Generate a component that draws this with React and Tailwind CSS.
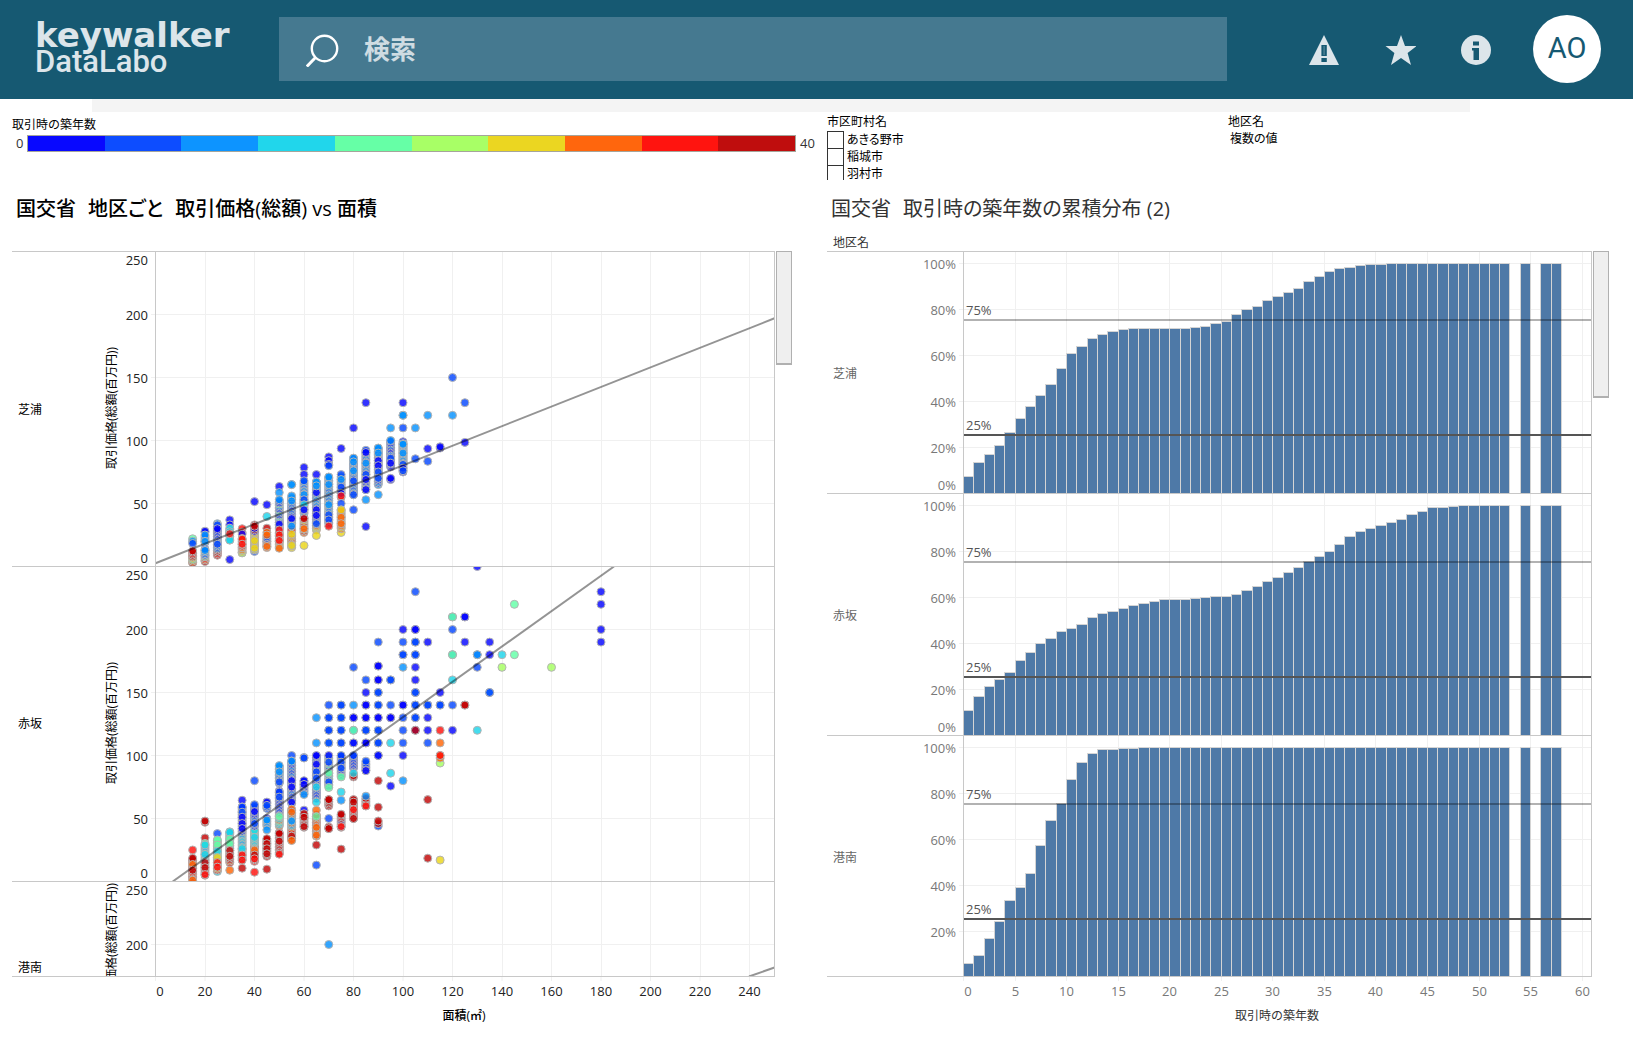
import React from "react";

const SANS = "font-['Open_Sans','Noto_Sans_CJK_JP',sans-serif]";

const PALETTE = ["#0000ff", "#0044ff", "#0090ff", "#18d3ea", "#5fffa5", "#a3ff5c", "#ead414", "#ff6200", "#ff0c08", "#c00000"];
const LEGEND = ["#0808ff", "#0d4dff", "#0d94ff", "#21d6eb", "#66ffa6", "#a8ff66", "#ebd621", "#ff660d", "#ff140f", "#bf0d0d"];

/*
 * Scatter marks, one string per floor-area column.
 * "v:c" is one mark (price v, colour index c); "a-b:cc" is a stack from a to b
 * that cycles through the given colour indexes. Later marks lie on top.
 */
const SHIBAURA = {
  15: "3:6 3-9:9746 9-12:98 22:4 20:2 18.3:1 12.4:9",
  20: "4.5:7 4-9:9784 9-14:212 27:0 28:0 19-26:12 20:2 12.7:2",
  25: "9-13:989 13:9 14-24:2121 34:2 27-33:1 24-29:01 30:0 17.7:1",
  30: "37:0 33:0 28-31:3 24-28:3 21:3 21:3 26:8 5.5:0",
  35: "10.8:6 11-15:567 30:8 27:8 25.7:0 15-23:78 21.7:8 17.7:8",
  40: "51.5:0 12-16:16 16-28:676 28-31:09 33:9 32:9 20.5:6 14.5:6",
  45: "49:0 39.7:3 15-20:77 20-24:171 30.4:9 27:7 25:7 16:7",
  50: "63.5:0 58.7:2 15-20:676 20-28:78 30-35:0 35-52:4012 53:2 33.6:0 29:8 25:8 20.6:8 14.5:7",
  55: "65:2 65:2 15-20:6 20-30:678 34-55:0212 56:2 52:2 38:0 32:2 25.6:6 16.7:6",
  60: "78.6:0 73:0 27-40:796 42-52:03 50-68:212 68:1 57:2 53:1 49:3 45:0 38:9 30:7 16.7:6",
  65: "73:0 29-36:756 36-50:01 49-68:2122 67:2 58.7:0 64:2 45:0 40.5:0 34:1 24.6:6",
  70: "87:0 84:0 81:0 80:1 34-44:101 44-54:3421 54-72:212 71:2 65:2 49:2 41:1 37:1 32:8",
  75: "93.7:0 27:6 30-45:767 55:8 58-72:012 73:1 69:2 63:1 58:0 56:8 50:1 45:6 39:7 34:7",
  80: "110:0 57-86:1212 86:2 83:2 76:2 68:1 57:1 45:1",
  85: "130:0 61-93:2012 90.5:0 82:2 73:1 69:0 61:0 53:2 31.7:0",
  90: "65-94:2120 94:2 90:2 84:0 80:0 75:1 70:1 57:2",
  95: "110:2 79-100:0012 100:2 86:1 82:0 69:0 70:0",
  100: "130:0 120:2 120:2 110:1 75-100:0102 82-98:22 97:2 90:2 81:1 78:0 76:1",
  105: "110:2 85.5:1",
  110: "120:2 93.5:0 83.5:1",
  115: "94:0 95:0",
  120: "150:1 120:2",
  125: "130:1 98.5:0",
};

const AKASAKA = {
  15: "1:7 3-12:99878 25:8 13-18:98 18.5:9 13.5:7 9:9 1:7",
  20: "47:9 48:9 34.6:9 5-17:989 17-31:3234 29:3 21.5:3 15:9 11:9 5.5:8",
  25: "38:1 8-18:38677 18-33:4345 33:4 29:4 24:3 19:6 15:8 11.4:8",
  30: "9:7 15-25:979 25-40:3433 39:3 33.6:4 30:4 24.6:9 20:9",
  35: "64.5:0 17-26:98 26-40:3323 40-60:0120 59:1 55:1 51:0 46:0 42:0 26:3 21:8 17:8 10.6:9",
  40: "80:1 16-30:899 30-42:4333 44-60:0121 61:1 55.5:0 46:1 35:3 25:7 21:9 18:8 7.4:8",
  45: "62:0 63:0 58-61:1 50:0 44-49:22 41:2 20-34:99 34:9 30:9 26:9 22:9 9.8:9",
  50: "78-92:122 92:2 87:2 79:1 22-40:989 44-54:7334 55-72:0101 71:1 67:1 51.6:4 38:9 32:9 21.7:8",
  55: "100:1 62-96:1201 95.5:2 80:0 75:0 63:0 33-42:789 43-58:732 55:7 48:2 36:9 32.5:7",
  60: "98.4:1 98:1 70-80:001 80:0 77:0 69:2 56.6:0 43-54:9989 51:9 43.6:9",
  65: "130:2 110:2 66-100:0111 100:0 93:0 87:1 82:1 75:3 63:3 36-54:7987 56.6:7 51.6:4 43:7 36.8:7 29:9 13:1",
  70: "140:1 130:1 130:1 120:1 120:1 110:2 110:1 76-100:0143 100:0 94.7:1 86:4 79:1 74.6:4 60-65:9 65:9 50:1 42-44:9 42:9",
  75: "140:1 140:1 130:1 130:1 120:1 120:1 110:1 110:1 84-100:101 100:1 94.7:1 90:1 83:4 71:3 64.5:2 43-53:9098 53.4:9 43.6:8 25.7:9",
  80: "170:1 140:2 130:0 130:0 120:2 120:4 110:1 110:0 90-100:01 100:1 83:9 84:9 86:3 50-65:9898 65:9 63:9 57:8 50:9",
  85: "160:1 150:0 140:0 140:0 130:0 130:0 120:1 120:1 110:0 110:0 88-95:01 95.5:1 88:0 60-67:89 67.7:2 60:8",
  90: "190:1 171:0 171:0 160:0 160:0 150:1 150:1 140:1 140:1 130:0 130:0 120:1 120:1 110:1 110:1 100:1 100:0 80:9 59:9 44:1 46:9 48:9",
  95: "160:1 160:1 140:1 130:0 130:0 110:3 86:3 75.7:0",
  100: "200:0 190:1 180:1 180:1 170:2 140:0 140:0 130:1 120:1 110:1 100:0 80:2",
  105: "230:1 200:0 200:0 190:1 190:1 180:1 180:1 170:0 160:0 150:1 150:1 140:1 140:1 130:1 130:1 120:0 120:9",
  110: "190:0 140:1 140:1 130:0 120:0 110:1 65:9 18.5:9",
  115: "150:0 140:1 140:1 120:8 110:7 94:5 98:7 100:7 100:8 17:6",
  120: "210:2 210:4 200:1 180:2 180:4 160:3 140:1 120:0",
  125: "210:0 210:0 190:0 140:9 140:9",
  130: "250:0 180:1 180:2 170:1 120:3",
  135: "190:0 180:0 150:2 150:1",
  140: "180:3 170:5",
  145: "220:4 180:4",
  160: "170:5",
  180: "230:0 220:0 200:0 190:0",
};

const KONAN = { 70: "200:2" };

function expand(columns) {
  const marks = [];
  for (const area of Object.keys(columns)) {
    for (const part of columns[area].split(" ")) {
      const [range, colours] = part.split(":");
      const [from, to] = range.split("-").map(Number);
      if (to === undefined) {
        marks.push([Number(area), from, Number(colours)]);
      } else {
        let i = 0;
        for (let v = from; v <= to; v += 1.2) {
          marks.push([Number(area), v, Number(colours[i % colours.length])]);
          i += 1;
        }
      }
    }
  }
  return marks;
}

const SCATTER_ROWS = [
  { name: "芝浦", top: 251.5, base: 566.5, nameY: 414, titleY: 408, marks: expand(SHIBAURA), line: [155.5, 563.3, 774.5, 318.3], ticks: [250, 200, 150, 100, 50, 0] },
  { name: "赤坂", top: 566.5, base: 881.5, nameY: 728, titleY: 723, marks: expand(AKASAKA), line: [172.7, 881.5, 614, 566.5], ticks: [250, 200, 150, 100, 50, 0] },
  { name: "港南", top: 881.5, base: 1196.5, nameY: 972, titleY: 944, marks: expand(KONAN), line: [749, 976.5, 774.5, 967.5], ticks: [250, 200] },
];

function ScatterChart() {
  const px = (a) => 155.5 + a * 2.475;
  return (
    <svg viewBox="12 251 763 782" className={`block h-auto min-w-0 flex-1 text-[13px] ${SANS}`} role="img" aria-label="取引価格(総額) vs 面積">
      {SCATTER_ROWS.map((row, r) => {
        const bottom = Math.min(row.base, 976.5);
        const py = (v) => row.base - v * 1.26;
        return (
          <g key={row.name}>
            <clipPath id={`scatter-${r}`}>
              <rect x="12" y={row.top} width="763" height={bottom - row.top} />
            </clipPath>
            <g stroke="#f0f0f0" shapeRendering="crispEdges">
              {[20, 40, 60, 80, 100, 120, 140, 160, 180, 200, 220, 240].map((a) => (
                <line key={a} x1={px(a)} x2={px(a)} y1={row.top} y2={bottom} />
              ))}
              {row.ticks.filter((v) => v > 0 && v < 250).map((v) => (
                <line key={v} x1="151" x2="774" y1={py(v)} y2={py(v)} />
              ))}
            </g>
            <g clipPath={`url(#scatter-${r})`}>
              {row.marks.map(([a, v, c], i) => (
                <circle key={i} cx={px(a)} cy={py(v)} r="4" fill={PALETTE[c]} fillOpacity="0.8" stroke="#b4b4b4" strokeWidth="1" />
              ))}
              <line x1={row.line[0]} y1={row.line[1]} x2={row.line[2]} y2={row.line[3]} stroke="#000" strokeOpacity="0.42" strokeWidth="2" />
              <text transform={`translate(116 ${row.titleY}) rotate(-90)`} textAnchor="middle" className="text-[12px]" fill="#000">
                取引価格(総額(百万円))
              </text>
            </g>
            {row.ticks.map((v) => {
              const y = v === 250 ? row.top + 8 : v === 0 ? row.base - 9 : py(v);
              return (
                <text key={v} x="148" y={y + 5} textAnchor="end" fill="#222">{v}</text>
              );
            })}
            <text x="18" y={row.nameY} className="text-[12px]" fill="#000">{row.name}</text>
            <line x1="12" x2="775" y1={row.top} y2={row.top} stroke="#c8c8c8" shapeRendering="crispEdges" />
          </g>
        );
      })}
      <g stroke="#c8c8c8" shapeRendering="crispEdges">
        <line x1="12" x2="775" y1="976.5" y2="976.5" />
        <line x1="155.5" x2="155.5" y1="251" y2="977" />
        <line x1="774.5" x2="774.5" y1="251" y2="977" />
      </g>
      {[0, 20, 40, 60, 80, 100, 120, 140, 160, 180, 200, 220, 240].map((a) => (
        <g key={a}>
          <line x1={px(a)} x2={px(a)} y1="977" y2="981" stroke="#f0f0f0" />
          <text x={a === 0 ? 160 : px(a)} y="996" textAnchor="middle" fill="#222">{a}</text>
        </g>
      ))}
      <text x="464" y="1020" textAnchor="middle" className="text-[12px] font-medium" fill="#000">面積(㎡)</text>
    </svg>
  );
}

const full = (values) => {
  const out = values.slice();
  while (out.length < 53) out.push(100);
  out.push(0, 100, 0, 100, 100);
  return out;
};

const BAR_ROWS = [
  {
    name: "芝浦", top: 251.5, nameY: 378,
    values: full([7.5, 13.5, 17, 21, 26.5, 32.5, 38, 42.5, 47.5, 54.5, 61, 64, 67.5, 69, 70.5, 71.3, 71.8, 71.8, 71.8, 71.8, 71.8, 71.8, 72.2, 72.7, 74, 74.9, 78, 80, 81.5, 83.7, 85.5, 87.3, 89.1, 92.3, 94.5, 96.5, 97.9, 98.3, 99, 99.5, 99.6]),
  },
  {
    name: "赤坂", top: 493.5, nameY: 620,
    values: full([11, 17, 21.4, 24.5, 27.5, 32.7, 36.2, 40, 42.3, 45.3, 46.6, 48.4, 51.4, 53.2, 54, 55.3, 56.6, 57.5, 58.4, 59.2, 59.2, 59.2, 59.7, 60.1, 60.5, 60.5, 61.4, 63, 64.7, 66.8, 68.6, 70.9, 73.2, 75.5, 77.7, 80, 83.2, 86.4, 88.6, 90, 91.4, 92.7, 94, 95.9, 97.5, 99.1, 99.3, 99.5, 99.8]),
  },
  {
    name: "港南", top: 735.5, nameY: 862,
    values: full([6, 9.5, 17, 24.5, 33.5, 39, 45.3, 57.5, 68.3, 75.6, 86, 93.5, 97.5, 99.1, 99.1, 99.5, 99.5]),
  },
];

function CumulativeChart() {
  const px = (n) => Math.round(963 + n * 10.31) + 0.5;
  return (
    <svg viewBox="827 251 765 782" className={`block h-auto min-w-0 flex-1 text-[13px] ${SANS}`} role="img" aria-label="取引時の築年数の累積分布">
      <clipPath id="bars">
        <rect x="963" y="251" width="629" height="726" />
      </clipPath>
      {BAR_ROWS.map((row, r) => {
        const base = row.top + 242;
        const py = (v) => base - v * 2.3;
        return (
          <g key={row.name}>
            <g stroke="#f0f0f0" shapeRendering="crispEdges">
              {[5, 10, 15, 20, 25, 30, 35, 40, 45, 50, 55, 60].map((n) => (
                <line key={n} x1={px(n)} x2={px(n)} y1={row.top} y2={Math.min(base, 977)} />
              ))}
              {[20, 40, 60, 80, 100].map((v) => (
                <line key={v} x1="959" x2="1591" y1={py(v)} y2={py(v)} />
              ))}
            </g>
            <g clipPath="url(#bars)" shapeRendering="crispEdges" stroke="#d4d4d4">
              {row.values.map((v, i) =>
                v > 0 ? (
                  <rect key={i} x={px(i)} y={base - Math.round(v * 2.3)} width={px(i + 1) - px(i)} height={Math.round(v * 2.3)} fill="#4e79a7" />
                ) : null
              )}
            </g>
            <rect x="964" y={row.top + 67.5} width="627" height="2" fill="#000" fillOpacity="0.3" />
            <rect x="964" y={row.top + 182.5} width="627" height="2" fill="#555" />
            <text x="966" y={row.top + 63.5} fill="#555">75%</text>
            <text x="966" y={row.top + 178.5} fill="#555">25%</text>
            {[0, 20, 40, 60, 80, 100].map((v) =>
              r === 2 && v === 0 ? null : (
                <text key={v} x="956" y={(v === 0 ? base - 9 : py(v)) + 5} textAnchor="end" fill="#787878">{v}%</text>
              )
            )}
            <text x="833" y={row.nameY} className="text-[12px]" fill="#666">{row.name}</text>
            <line x1="827" x2="1592" y1={row.top} y2={row.top} stroke="#c8c8c8" shapeRendering="crispEdges" />
          </g>
        );
      })}
      <g stroke="#c8c8c8" shapeRendering="crispEdges">
        <line x1="827" x2="1592" y1="976.5" y2="976.5" />
        <line x1="963.5" x2="963.5" y1="251" y2="977" />
        <line x1="1591.5" x2="1591.5" y1="251" y2="977" />
      </g>
      {[0, 5, 10, 15, 20, 25, 30, 35, 40, 45, 50, 55, 60].map((n) => (
        <g key={n}>
          <line x1={px(n)} x2={px(n)} y1="977" y2="981" stroke="#f0f0f0" />
          <text x={n === 0 ? 968 : px(n)} y="996" textAnchor="middle" fill="#787878">{n}</text>
        </g>
      ))}
      <text x="1277" y="1020" textAnchor="middle" className="text-[12px]" fill="#333">取引時の築年数</text>
    </svg>
  );
}

function ScrollTrack({ thumb }) {
  return (
    <div className="h-[93%] w-4 shrink-0 border border-[#b0b0b0] bg-white">
      <div className={`${thumb} border-b border-[#b0b0b0] bg-[#efefef]`} />
    </div>
  );
}

function Header() {
  return (
    <header className="flex h-[99px] items-center bg-[#165972] pr-8 pb-px pl-[35px] text-[#dce5ea]">
      <a href="#" className="w-[244px] shrink-0 pb-[2px]">
        <span className="block font-[family-name:'DejaVu_Sans'] text-[34px] leading-[26px] font-bold">keywalker</span>
        <span className="block font-[family-name:Roboto] text-[31px] leading-[27px] font-medium">DataLabo</span>
      </a>
      <label className="flex h-16 min-w-0 flex-1 items-center gap-6 bg-[#457990] pr-7 pl-[27px]">
        <svg viewBox="0 0 34 36" className="h-9 w-[34px] shrink-0" fill="none" stroke="#fff" strokeWidth="2.4" aria-hidden="true">
          <circle cx="18.5" cy="17.5" r="12.7" />
          <path d="M9.5 26.500L0.8 35.500" strokeWidth="3" />
        </svg>
        <input
          type="text"
          aria-label="検索"
          placeholder="検索"
          className="min-w-0 flex-1 bg-transparent pb-1 font-[family-name:'Noto_Sans_CJK_JP'] text-[26px] font-bold outline-none placeholder:text-[#cfdce2]"
        />
      </label>
      <nav className="ml-[81px] flex items-center gap-11">
        <button type="button" aria-label="警告" className="w-8">
          <svg viewBox="0 0 32 32" className="h-8 w-8">
            <path d="M16 2L31 32H1z" fill="#dce5ea" />
            <path d="M13.4 12h5.4v11h-5.4zM13.4 25h5.4v4h-5.4z" fill="#165972" />
            <path d="M15.3 13h1.600v9h-1.600z" fill="#dce5ea" opacity="0.25" />
          </svg>
        </button>
        <button type="button" aria-label="お気に入り" className="w-8">
          <svg viewBox="-1 -1 32 32" className="h-8 w-8" fill="#dce5ea">
            <path d="M16 1L20 12H31.500L22.600 19L26 31L16 24L6 31L9.400 19L0.500 12H12z" />
          </svg>
        </button>
        <button type="button" aria-label="情報" className="w-8">
          <svg viewBox="0 0 32 32" className="h-8 w-8">
            <circle cx="16" cy="17" r="15" fill="#dce5ea" />
            <path d="M13 8.500h6v4h-6zM12 15h7v12h-5.500v-9.500H12z" fill="#165972" />
          </svg>
        </button>
      </nav>
      <button type="button" className="ml-[41px] h-[68px] w-[68px] rounded-full bg-white font-[family-name:Roboto] text-[29px] text-[#165972]">
        AO
      </button>
    </header>
  );
}

function ChartTitle({ parts, className }) {
  return (
    <h2 className={`h-[47px] pl-1 text-[20px] leading-[46px] whitespace-nowrap [font-feature-settings:'palt'] ${className}`}>
      {parts.map((part, i) => (
        <React.Fragment key={part}>
          {i > 0 && <span className="text-[12px]">　</span>}
          {part}
        </React.Fragment>
      ))}
    </h2>
  );
}

export default function App() {
  return (
    <div className={`min-h-screen bg-white text-black ${SANS}`}>
      <Header />
      <div className="mr-[163px] ml-[92px] h-[13px] bg-[#f4f4f4]" />
      <main className="grid grid-cols-[780fr_782fr] gap-x-[35px] pr-6 pl-3">
        <section>
          <div className="h-[74px] pt-[5px]">
            <div className="text-[12px] leading-4">取引時の築年数</div>
            <div className="mt-[2px] flex h-[17px] items-center text-[13px] text-[#333]">
              <span className="w-[15px] pl-1">0</span>
              <div className="flex h-full flex-1 border border-[#a5a59b]">
                {LEGEND.map((c) => (
                  <div key={c} className="flex-1" style={{ backgroundColor: c }} />
                ))}
              </div>
              <span className="-mr-6 w-5 pl-1">40</span>
            </div>
          </div>
          <ChartTitle parts={["国交省", "地区ごと", "取引価格(総額) vs 面積"]} className="font-medium" />
          <div className="h-[18px]" />
          <div className="flex gap-px">
            <ScatterChart />
            <ScrollTrack thumb="h-[112px]" />
          </div>
        </section>
        <section>
          <div className="grid h-[74px] grid-cols-[401fr_381fr] pt-[2px] text-[12px] leading-4">
            <fieldset>
              <legend>市区町村名</legend>
              <div className="h-[50px] overflow-hidden pt-px">
                {["あきる野市", "稲城市", "羽村市"].map((name) => (
                  <label key={name} className="flex h-[17px] items-center gap-[3px] [font-feature-settings:'palt']">
                    <input type="checkbox" className="h-[18px] w-[17px] shrink-0 appearance-none border border-[#333] bg-white" />
                    <span>{name}</span>
                  </label>
                ))}
              </div>
            </fieldset>
            <div>
              <div>地区名</div>
              <button type="button" className="mt-px block pl-[2px] [font-feature-settings:'palt']">複数の値</button>
            </div>
          </div>
          <ChartTitle parts={["国交省", "取引時の築年数の累積分布 (2)"]} className="font-normal text-[#333]" />
          <div className="h-[18px] pl-[6px] text-[12px] leading-5 text-[#333]">地区名</div>
          <div className="flex gap-px">
            <CumulativeChart />
            <ScrollTrack thumb="h-[145px]" />
          </div>
        </section>
      </main>
    </div>
  );
}
